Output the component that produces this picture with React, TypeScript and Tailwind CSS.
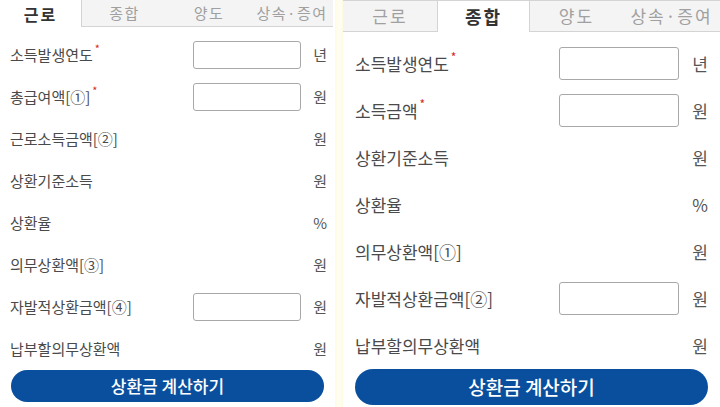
import type { ReactNode } from "react";

type Row = {
  label: ReactNode;
  unit: string;
  required?: boolean;
  input?: boolean;
};

type Size = {
  width: string;
  tabRow: string;
  tabWidths: string[];
  tabText: string;
  activeText: string;
  body: string;
  row: string;
  label: string;
  star: string;
  input: string;
  unit: string;
  button: string;
  buttonText: string;
};

const small: Size = {
  width: "w-[335px]",
  tabRow: "h-[27px]",
  tabWidths: ["w-[82px]", "w-[85px]", "w-[84px]", "w-[82px]"],
  tabText: "text-[15px] tracking-[1.5px]",
  activeText: "text-[16px] tracking-[2px]",
  body: "pt-[7px]",
  row: "h-[42px] pl-[10px] pr-[8px]",
  label: "text-[15px]",
  star: "text-[11px] -top-[8px]",
  input: "w-[108px] h-[28px]",
  unit: "w-[26px] text-[15px]",
  button: "mx-[11px] h-[32px]",
  buttonText: "text-[17px]",
};

const large: Size = {
  width: "flex-1",
  tabRow: "h-[32px] border-t border-[#d4d4d4]",
  tabWidths: ["w-[94px]", "w-[93px]", "w-[93px]", "flex-1"],
  tabText: "text-[17px] tracking-[2px]",
  activeText: "text-[18px] tracking-[2px]",
  body: "pt-[8px]",
  row: "h-[47px] pl-[12px] pr-[12px]",
  label: "text-[17px]",
  star: "text-[12px] -top-[9px]",
  input: "w-[120px] h-[33px]",
  unit: "w-[29px] text-[17px]",
  button: "mx-[12px] h-[36px]",
  buttonText: "text-[19px]",
};

const tabs = ["근로", "종합", "양도", "상속·증여"];

const wageRows: Row[] = [
  { label: "소득발생연도", unit: "년", required: true, input: true },
  { label: "총급여액[①]", unit: "원", required: true, input: true },
  { label: "근로소득금액[②]", unit: "원" },
  { label: "상환기준소득", unit: "원" },
  { label: "상환율", unit: "%" },
  { label: "의무상환액[③]", unit: "원" },
  { label: "자발적상환금액[④]", unit: "원", input: true },
  { label: "납부할의무상환액", unit: "원" },
];

const totalRows: Row[] = [
  { label: "소득발생연도", unit: "년", required: true, input: true },
  { label: "소득금액", unit: "원", required: true, input: true },
  { label: "상환기준소득", unit: "원" },
  { label: "상환율", unit: "%" },
  { label: "의무상환액[①]", unit: "원" },
  { label: "자발적상환금액[②]", unit: "원", input: true },
  { label: "납부할의무상환액", unit: "원" },
];

export default function App() {
  return (
    <div
      className="flex w-[720px] h-[407px] overflow-hidden bg-white text-[#444]"
      style={{ fontFamily: '"Noto Sans CJK KR", "Noto Sans", sans-serif' }}
    >
      <Panel size={small} active={0} rows={wageRows} />
      <div className="w-[8px] bg-gradient-to-r from-[#fffbe0] via-[#fffef4] to-[#fffbe0]" />
      <Panel size={large} active={1} rows={totalRows} />
    </div>
  );
}

function Panel({ size, active, rows }: { size: Size; active: number; rows: Row[] }) {
  return (
    <div className={`${size.width} flex flex-col`}>
      <div className={`flex ${size.tabRow}`}>
        {tabs.map((tab, i) => (
          <div
            key={tab}
            className={`${size.tabWidths[i]} flex items-center justify-center ${
              i === active
                ? `bg-white text-[#333] font-bold ${size.activeText} border-l border-r border-[#d4d4d4] first:border-l-0`
                : `bg-[#f4f4f4] text-[#a0a0a0] ${size.tabText} border-b border-[#d4d4d4]`
            }`}
          >
            {tab}
          </div>
        ))}
      </div>

      <div className={size.body}>
        {rows.map((row, i) => (
          <div key={i} className={`flex items-center ${size.row}`}>
            <p className={`flex-1 ${size.label} text-[#4a4a4a]`}>
              {row.label}
              {row.required && (
                <span className={`relative ${size.star} text-[#d42a1e] ml-[2px]`}>*</span>
              )}
            </p>
            {row.input && (
              <div className={`${size.input} border border-[#a8a8a8] rounded-[3px] bg-white`} />
            )}
            <p className={`${size.unit} text-right text-[#555]`}>{row.unit}</p>
          </div>
        ))}
      </div>

      <button
        className={`${size.button} rounded-full bg-[#0a4f9e] text-white font-medium ${size.buttonText} flex items-center justify-center`}
      >
        상환금 계산하기
      </button>
    </div>
  );
}
